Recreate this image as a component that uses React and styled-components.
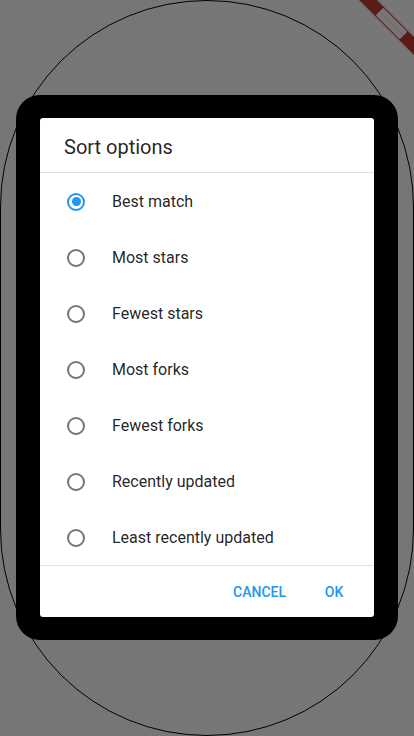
import React, { useState } from "react";
import styled, { createGlobalStyle } from "styled-components";

const Global = createGlobalStyle`
  html, body { margin: 0; padding: 0; }
  body { background: #767676; font-family: Roboto, "Noto Sans", sans-serif; }
  * { box-sizing: border-box; }
`;

const Stage = styled.div`
  position: relative;
  width: 414px;
  height: 736px;
  background: #767676;
  overflow: hidden;
`;

const Outline = styled.div`
  width: 414px;
  height: 736px;
  border: 1px solid #000;
  border-radius: 9999px;
  padding-top: 94px;
  display: flex;
  align-items: flex-start;
  justify-content: center;
`;

const Frame = styled.div`
  width: 382px;
  height: 545px;
  background: #000;
  border-radius: 24px;
  padding: 23px 24px;
  display: flex;
`;

const Dialog = styled.div`
  flex: 1;
  background: #fff;
  border-radius: 3px;
  display: flex;
  flex-direction: column;
  overflow: hidden;
`;

const Title = styled.div`
  padding: 17px 24px 13px;
  font-size: 20px;
  line-height: 24px;
  color: rgba(0, 0, 0, 0.87);
  border-bottom: 1px solid #e0e0e0;
`;

const List = styled.div`
  display: flex;
  flex-direction: column;
`;

const Row = styled.label`
  height: 56px;
  display: flex;
  align-items: center;
  padding-left: 16px;
  gap: 16px;
  cursor: pointer;
`;

const RadioBox = styled.span`
  width: 40px;
  height: 40px;
  padding-top: 1px;
  display: flex;
  align-items: center;
  justify-content: center;
`;

const Radio = styled.span`
  width: 18px;
  height: 18px;
  border-radius: 50%;
  border: 2px solid ${(p) => (p.$checked ? "#2196f3" : "#757575")};
  display: flex;
  align-items: center;
  justify-content: center;
  &::after {
    content: "";
    width: 9px;
    height: 9px;
    border-radius: 50%;
    background: ${(p) => (p.$checked ? "#2196f3" : "transparent")};
  }
`;

const Label = styled.span`
  padding-top: 2px;
  font-size: 16px;
  line-height: 20px;
  color: rgba(0, 0, 0, 0.87);
`;

const Actions = styled.div`
  border-top: 1px solid #e0e0e0;
  height: 52px;
  padding: 8px 8px 7px;
  display: flex;
  justify-content: flex-end;
  align-items: flex-start;
`;

const Button = styled.button`
  height: 36px;
  min-width: 64px;
  padding: 0 16px;
  border: none;
  background: transparent;
  color: #2196f3;
  font-family: Roboto, "Noto Sans", sans-serif;
  font-weight: 500;
  font-size: 14px;
  letter-spacing: 0;
  cursor: pointer;
`;

const Banner = styled.svg`
  position: absolute;
  top: 0;
  right: 0;
  width: 60px;
  height: 60px;
`;

const options = [
  "Best match",
  "Most stars",
  "Fewest stars",
  "Most forks",
  "Fewest forks",
  "Recently updated",
  "Least recently updated",
];

export default function App() {
  const [sel, setSel] = useState(0);
  return (
    <>
      <Global />
      <Stage>
        <Outline>
          <Frame>
            <Dialog>
              <Title>Sort options</Title>
              <List>
                {options.map((o, i) => (
                  <Row key={o} onClick={() => setSel(i)}>
                    <RadioBox>
                      <Radio $checked={sel === i} />
                    </RadioBox>
                    <Label>{o}</Label>
                  </Row>
                ))}
              </List>
              <Actions>
                <Button>CANCEL</Button>
                <Button>OK</Button>
              </Actions>
            </Dialog>
          </Frame>
        </Outline>
        <Banner viewBox="354 0 60 60">
          <polygon points="359,0 377,0 414,37 414,55" fill="#5c1b1b" />
          <polygon
            points="383.25,7.75 407.25,31.75 399.75,39.25 375.75,15.25"
            fill="#767676"
          />
          <line
            x1="379.5"
            y1="11.5"
            x2="403.5"
            y2="35.5"
            stroke="#5c1b1b"
            strokeOpacity="0.35"
            strokeWidth="0.6"
          />
        </Banner>
      </Stage>
    </>
  );
}
